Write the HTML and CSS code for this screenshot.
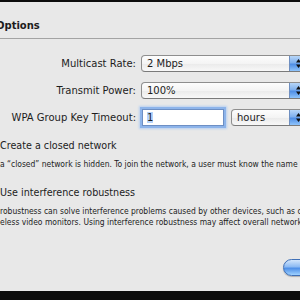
FILE: index.html
```html
<!DOCTYPE html>
<html lang="en">
<head>
  <meta charset="UTF-8" />
  <title>Options</title>
  <link rel="stylesheet" href="styles.css">
</head>
<body>
  <div class="window">
    <header class="pane-head">
      <h2>Options</h2>
    </header>

    <div class="fields">
      <label>Multicast Rate:</label>
      <div class="popup">
        <span class="popup-value">2 Mbps</span>
        <span class="stepper"><svg width="5" height="9" viewBox="0 0 5 9"><polygon points="2.5,0 5,3.5 0,3.5"/><polygon points="0,5.5 5,5.5 2.5,9"/></svg></span>
      </div>

      <label>Transmit Power:</label>
      <div class="popup">
        <span class="popup-value">100%</span>
        <span class="stepper"><svg width="5" height="9" viewBox="0 0 5 9"><polygon points="2.5,0 5,3.5 0,3.5"/><polygon points="0,5.5 5,5.5 2.5,9"/></svg></span>
      </div>

      <label>WPA Group Key Timeout:</label>
      <div class="timeout">
        <div class="textfield"><span class="selected">1</span></div>
        <div class="popup popup-short">
          <span class="popup-value">hours</span>
          <span class="stepper"><svg width="5" height="9" viewBox="0 0 5 9"><polygon points="2.5,0 5,3.5 0,3.5"/><polygon points="0,5.5 5,5.5 2.5,9"/></svg></span>
        </div>
      </div>
    </div>

    <section class="opt">
      <div class="opt-title">Create a closed network</div>
      <p class="opt-desc">a “closed” network is hidden. To join the network, a user must know the name</p>
    </section>

    <section class="opt">
      <div class="opt-title opt-title-gap">Use interference robustness</div>
      <p class="opt-desc">robustness can solve interference problems caused by other devices, such as cordless phones</p>
      <p class="opt-desc">eless video monitors. Using interference robustness may affect overall network performance.</p>
    </section>

    <footer class="actions">
      <button class="aqua">OK</button>
    </footer>
  </div>
</body>
</html>
```

FILE: styles.css
```css
* {
  box-sizing: border-box;
}

html, body {
  margin: 0;
  height: 300px;
  overflow: hidden;
}

body {
  background: #0c0c0c;
  font-family: "DejaVu Sans", sans-serif;
  color: #1c1c1c;
}

.window {
  margin-top: 2px;
  height: 289px;
  background: #e8e8e8;
  overflow: hidden;
}

.pane-head {
  padding: 18px 0 6px;
  border-bottom: 1px solid #a3a3a3;
}

.pane-head h2 {
  margin: 0 0 0 -4px;
  font-size: 10px;
  line-height: 12px;
  font-weight: bold;
}

.fields {
  display: grid;
  grid-template-columns: 136px 1fr;
  column-gap: 5px;
  row-gap: 10px;
  align-items: center;
  padding-top: 16px;
}

.fields label {
  text-align: right;
  font-size: 10px;
  line-height: 12px;
  white-space: nowrap;
}

.popup {
  display: flex;
  align-items: center;
  width: 166px;
  height: 17px;
  padding-left: 5px;
  border: 1px solid #8e8e8e;
  border-bottom-color: #7a7a7a;
  border-radius: 4px;
  background: linear-gradient(#fdfdfd, #f4f4f4 50%, #eaeaea 51%, #f8f8f8);
  font-size: 10px;
  line-height: 12px;
  overflow: hidden;
}

.popup-short {
  width: 76px;
}

.popup-value {
  flex: 1;
  white-space: nowrap;
}

.stepper {
  display: flex;
  align-items: center;
  justify-content: center;
  width: 17px;
  height: 100%;
  border-left: 1px solid #6f8fc0;
  background: linear-gradient(#b7d6f8, #7fb0ee 45%, #4f8ee6 55%, #8fc4fb);
}

.stepper svg {
  fill: #111;
}

.timeout {
  display: flex;
  align-items: center;
  gap: 7px;
}

.textfield {
  width: 82px;
  height: 17px;
  margin-left: 1px;
  padding: 1px 4px 0;
  border: 1px solid #6d8fc4;
  background: #fff;
  box-shadow: 0 0 0 2px #8db4ea, 0 0 2px 3px #b7cff0;
  font-size: 10px;
  line-height: 13px;
}

.selected {
  background: #b5d3fb;
}

.opt-title {
  margin-top: 14px;
  font-size: 9.6px;
  line-height: 12px;
  white-space: nowrap;
}

.opt-title-gap {
  margin-top: 17px;
}

.opt-desc {
  margin: 0;
  font-family: "DejaVu Sans Condensed", "DejaVu Sans", sans-serif;
  font-stretch: condensed;
  font-size: 8.45px;
  line-height: 11px;
  white-space: nowrap;
}

.opt-title + .opt-desc {
  margin-top: 7px;
}

.actions {
  display: flex;
  justify-content: flex-end;
  margin-top: 31px;
}

.aqua {
  width: 60px;
  height: 17px;
  margin-right: -43px;
  padding: 0;
  border: 1px solid #3f6fb6;
  border-radius: 9px;
  background: linear-gradient(#d3e6fc, #8cbaf3 45%, #4e8fe8 55%, #9fd2ff);
  box-shadow: 0 1px 1px rgba(0, 0, 0, 0.25);
  font-family: "DejaVu Sans", sans-serif;
  font-size: 10px;
  color: #111;
}
```
